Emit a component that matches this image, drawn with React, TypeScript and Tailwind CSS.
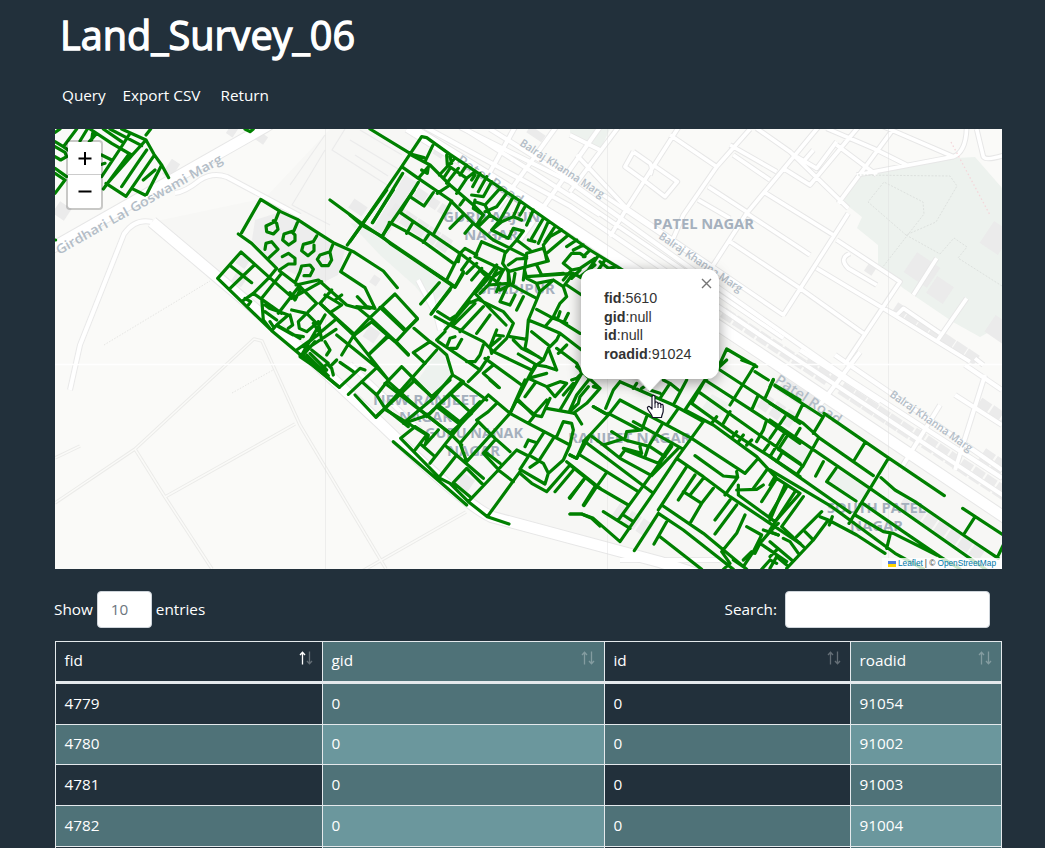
import React from "react";

/* Survey lines are stored per map sheet, in thirds of a pixel from the sheet origin. */
type Sheet = { x: number; y: number; d: string };

const surveySheets: Sheet[] = [
  {
    x: 50,
    y: 125,
    d: `M215 12 L288 45 L312 88 L335 120 L356 158 M302 12 L288 30 M120 12 L185 55 L245 90 M160 12 L215 50 M180 12 L275 62
    M288 45 L245 92 L168 180 M240 25 L210 72 L155 155 M168 175 L228 214 L312 92 M235 90 L160 192 M290 75 L262 115 L215 185
    M335 120 L290 208 M245 190 L285 210 M315 135 L280 165 M155 90 L185 105 M15 22 L30 12 M80 12 L40 65 L15 50 M15 65 L45 82 L50 95 L32 105 L15 95
    M15 130 L50 155 M15 145 L45 165 L15 205 M112 12 L90 48 M140 25 L118 50 M128 25 L125 45 M155 118 L165 115 M585 12 L600 20 L610 12 M12 345 L17 345 M60 60 L95 80 M40 65 L75 90`,
  },
  {
    x: 210,
    y: 190,
    d: `M95 128 L152 28 L212 65 L262 88 L318 125 L370 158 L430 185 L520 243 L562 293
    M85 132 L125 160 L200 235 L178 262 M207 65 L195 95 L168 108 L170 125 L190 132 L204 118 L200 100 L190 92
    M262 98 L252 122 L222 132 L218 150 L236 165 L255 152 L255 135 L245 125 M320 138 L310 155 L280 163 L275 182 L294 197 L312 182 L312 165
    M368 165 L360 185 L330 195 L322 208 L335 227 L355 227 L365 210 L360 188 M165 178 L168 160 L185 155 L204 178 L178 202
    M217 200 L235 190 L255 205 L255 222 L235 222 L208 240 M282 257 L300 257 L310 238 L300 225 L275 228 L270 245 L258 272
    M23 265 L93 186 L178 262 L250 325 M62 228 L125 278 M133 225 L57 298 M23 265 L185 422 L388 592 M178 262 L130 310 L95 335
    M208 242 L268 288 L320 340 L295 365 M215 250 L155 325 L160 390 L185 422 M130 310 L215 370 M268 288 L205 370 M240 308 L255 330 L270 300
    M258 285 L325 270 L410 345 L445 355 L480 383 M105 325 L122 335 L115 345 M165 345 L178 355 L235 375 L200 405 L270 445
    M330 340 L365 300 M345 315 L395 345 L365 365 M330 340 L430 435 M375 330 L395 315 M335 275 L245 325 M240 375 L248 405 L235 415
    M245 360 L290 370 L265 395 L268 415 L290 425 L320 400 L290 370 M345 375 L275 495 M375 390 L280 470 M378 418 L285 480 M325 395 L335 450 M310 400 L330 430 L260 480
    M180 395 L190 410 M315 455 L275 500 M165 365 L200 390 M200 405 L185 422 M205 410 L250 435 L280 440
    M420 190 L392 245 L465 293 L495 355 L470 350 L442 320 M480 383 L555 312 L622 385 L558 455 L480 383 M515 350 L585 418
    M430 435 L480 383 M530 440 L480 490 M558 455 L595 493 M360 30 L455 100 L720 280 M412 165 L530 0 M487 98 L550 0 M612 0 L515 140 M663 373 L720 300
    M285 500 L345 545 M300 490 L350 540 M440 350 L480 355`,
  },
  {
    x: 350,
    y: 125,
    d: `M60 12 L185 88 L222 98 M155 125 L215 35 L230 38 L300 88 L510 228 L720 375 L835 446 M155 125 L35 300 L0 350 M158 145 L68 293
    M155 125 L205 160 L300 225 L370 295 L430 345 L530 395 M180 88 L240 120 L300 180 L370 240 L400 270 M248 62 L225 110 M205 160 L235 125 L232 145 L215 135
    M205 172 L150 262 M180 215 L222 243 L250 203 M118 292 L170 320 L220 350 L310 415 M150 262 L330 385 L440 470 M187 295 L170 325 M235 330 L220 352 M330 385 L290 465
    M118 295 L97 335 M0 270 L35 300 L97 335 L120 355 L315 487 L340 445 M290 90 L292 120 L350 160 L375 140 M310 105 L268 150 M300 95 L305 115 M300 130 L280 160 M325 130 L290 175 M350 160 L320 205
    M300 180 L262 205 M305 228 L252 325 M340 270 L300 310 M370 295 L345 325 M350 120 L330 150 M375 150 L365 165 M390 145 L368 185 M410 155 L385 200
    M425 170 L400 215 L365 210 M450 190 L405 240 M470 205 L440 245 L405 260 M490 215 L450 285 L425 315 M510 230 L490 275 L455 290 L425 315 L475 340 L490 310 L520 318 M525 245 L510 270
    M345 220 L330 240 M375 225 L370 250 L400 270 L380 300 M405 240 L420 270 L450 290 M405 240 L375 230 M550 255 L530 300 M420 270 L385 305 M490 275 L515 285
    M580 280 L545 340 M595 290 L565 355 M615 305 L585 350 M635 315 L600 335 L580 360 L590 405 M655 330 L590 385 M680 345 L650 365 M700 360 L670 375
    M520 318 L500 345 L465 385 L458 415 M500 345 L540 375 M535 345 L555 350 M395 350 L465 380 M395 350 L375 395 L460 435 M530 385 L580 370 L595 408 L530 425 M530 385 L520 465
    M480 475 L475 440 L530 425 M475 420 L500 402 L530 400 M458 415 L475 440 M330 385 L345 370 L380 390 M330 385 L325 410 M360 400 L335 435 M380 415 L350 445 M395 430 L365 465
    M440 420 L410 460 L375 500 M460 435 L440 475 M560 420 L575 450 M575 450 L640 445 M640 415 L665 385 L690 385 L705 395 M640 415 L665 435 L690 430 L735 400 M665 435 L640 465
    M720 375 L700 395 M745 392 L715 435 M765 405 L735 450 M690 455 L735 420 M750 410 L775 430 L800 425`,
  },
  {
    x: 400,
    y: 270,
    d: `M118 38 L62 102 M155 50 L95 130 M90 0 L165 50 L190 5 M113 125 L150 148 L170 135 L255 25 M105 140 L160 170 L250 215 L280 245 L395 300 M210 95 L135 180 M225 100 L160 165 M250 110 L180 185 M270 135 L230 190
    M225 70 L318 165 M210 98 L235 88 L310 125 L340 160 L320 205 L280 245 M225 70 L265 25 L240 0 M290 0 L265 45 M42 175 L90 215 L40 248 L75 280 M110 210 L135 185 M115 215 L240 300
    M250 225 L240 255 L225 275 L200 275 M165 200 L150 205 L140 230 M185 208 L170 235 L150 235 M90 215 L118 235 L140 255 L158 315 L190 335
    M255 265 L365 345 M280 285 L250 310 L298 353 M240 300 L205 335 M265 262 L240 300 M405 285 L330 430 M290 180 L270 230 L300 205 M285 195 L310 198 M270 230 L275 250
    M330 200 L380 208 L385 150 M380 208 L375 235 L430 270 M340 210 L365 235 L415 260 M355 252 L410 285 L430 270 L445 235 L470 210 L480 190 M445 225 L395 185
    M385 150 L435 170 L480 190 L545 240 M435 170 L460 140 L540 190 M410 118 L460 145 L500 160 M480 125 L475 140 M505 130 L495 150 M385 150 L410 90 L420 65 L460 30 M325 40 L410 85
    M345 75 L330 105 M370 80 L350 120 M325 40 L300 95 L330 105 M325 0 L325 40 M345 10 L340 40 L300 60 M375 5 L380 25 L410 40 L460 30 L490 50 L520 10 L565 35 M410 40 L420 65 M325 40 L265 45
    M490 50 L500 80 L480 100 L460 140 M500 45 L545 75 M380 20 L520 10 M540 0 L515 25 M445 235 L470 300 M470 235 L530 280 L545 310 M500 225 L475 250
    M410 285 L440 290 L470 300 M385 325 L440 350 L480 335 L500 340 L465 380 L440 350 M385 325 L410 285 M405 340 L375 380 M440 310 L385 325 M530 290 L600 355
    M545 310 L480 420 M570 325 L530 375 L510 420 M600 355 L560 400 L520 430 M520 340 L490 375 M565 350 L540 380 L535 400 L510 425 M600 355 L580 350
    M355 390 L400 435 M450 385 L425 440 L400 435 L440 390 M440 415 L525 430 L545 462 M580 410 L615 430 M265 45 L240 70 M290 65 L300 40 M280 20 L310 0 M545 310 L530 325 L515 330`,
  },
  {
    x: 300,
    y: 300,
    d: `M0 165 L118 262 L180 205 L195 210 M165 285 L228 352 L255 325 M145 283 L228 205 M110 105 L228 200 L265 240 M160 108 L265 240 L230 285 M215 65 L160 108 L125 165
    M35 150 L85 190 L65 205 M120 187 L160 215 M85 195 L95 205 L100 225 M75 125 L90 150 L80 165 M110 180 L90 200 M60 10 L165 105 M215 65 L285 125 L325 165 M265 110 L210 160
    M240 22 L315 93 L352 58 M0 170 L70 218 M20 165 L85 228 M185 245 L230 285 L255 325 M305 200 L262 245 M305 200 L345 240 L400 295 L455 228 M410 150 L255 325 L325 380 M265 245 L355 325 L450 400
    M400 295 L310 370 M490 248 L410 320 L475 370 L540 305 M400 330 L380 350`,
  },
  {
    x: 370,
    y: 380,
    d: `M20 108 L88 45 L130 5 M45 10 L240 160 L275 195 M45 88 L115 130 L170 165 M130 0 L185 50 L240 0 M275 5 L175 105 L115 125 M275 5 L350 60 M245 45 L305 100 L240 160 M205 75 L275 130
    M355 45 L275 130 L180 250 M355 45 L420 100 L290 245 M380 70 L355 95 L320 120 L375 175 L420 215 M135 140 L92 175 L210 295 M170 165 L135 210 M135 140 L175 165 L165 195 M205 150 L165 195 M155 195 L195 230
    M230 200 L340 295 M260 225 L205 295 M325 125 L270 190 L290 245 M70 185 L200 297 L290 375 M200 290 L240 310 L295 365 L352 410 L417 432 M352 410 L450 275 M295 365 L385 270 L430 305
    M250 308 L290 265 L340 315 M250 308 L300 350 M375 180 L340 220 L385 268 L440 210 L475 228 M345 215 L390 250 M465 0 L420 100 L475 130 L600 195 M440 60 L495 105 L475 130
    M520 160 L450 268 L525 312 L535 280 L520 250 L485 230 M550 175 L505 245 L480 262 M450 280 L485 310 L530 335 L600 255 M465 200 L475 180 L500 188 M600 195 L580 240 L535 280
    M600 195 L610 150 L605 130 L580 125 L560 170 M610 270 L555 335 M645 295 L598 353 M675 320 L640 375 M590 245 L690 325 M600 225 L620 235 L640 190 M600 402 L635 402 L665 415 L690 438 M360 0 L385 22`,
  },
  {
    x: 570,
    y: 360,
    d: `M150 65 L130 90 L107 145 M150 65 L310 135 L400 185 M70 140 L115 165 L150 120 L365 235 M115 165 L60 225 L20 295 M230 170 L215 210 L170 215 L165 235 L100 255 L150 295 L245 347 L325 265
    M190 185 L335 265 M115 160 L210 210 M125 215 L165 240 L240 260 L285 290 M160 265 L215 280 L210 260 M150 290 L165 270 L265 310 M275 195 L235 260 L225 290 M305 250 L265 310
    M20 295 L0 285 M45 245 L250 400 M30 285 L205 395 M0 315 L80 380 L175 435 M40 245 L60 225 L100 255 M80 380 L42 437 M40 360 L0 415 M108 340 L80 380
    M400 185 L320 295 L250 400 L150 545 L70 475 L35 462 L0 462 M305 260 L145 480 M350 320 L265 450 M320 295 L400 350 L480 410 L600 490 L690 550
    M265 460 L193 572 M265 460 L340 510 L490 628 M275 435 L400 520 L530 628 M290 485 L252 552 M270 530 L395 628 M100 455 L180 505 M160 465 L190 485
    M375 287 L460 348 L503 352 L500 335 M365 235 L525 340 L560 300 M503 352 L465 405 M500 390 L560 388 L580 375 M505 375 L505 405 L615 485
    M375 345 L325 420 M400 355 L360 405 M340 395 L395 430 L360 490 M430 385 L395 430 M480 420 L435 480 M500 435 L435 522 M525 465 L500 520 L455 575 L480 610 L460 628
    M310 135 L350 60 M270 115 L300 70 L325 90 M300 70 L280 60 M240 90 L270 100 M230 75 L215 85 M200 70 L190 85 M345 150 L405 60 M325 145 L290 195 M345 150 L430 195 L560 290 L620 355 L690 400
    M470 0 L405 60 M405 60 L365 130 M365 130 L490 220 L600 290 L690 350 M385 95 L590 240 L690 310 M405 60 L590 180 L690 250 M450 30 L565 105 L690 190 M515 0 L555 15 L480 135 M555 35 L595 60 M610 60 L585 115 M615 75 L690 120
    M565 105 L545 150 M480 155 L460 190 M590 180 L580 210 L560 245 M640 225 L600 290 M425 190 L440 170 M485 235 L500 215 M505 245 L520 225 M530 255 L545 240 M580 275 L595 255
    M620 355 L575 425 M590 330 L550 385 M650 380 L600 465 M690 400 L615 485 M530 500 L575 525 L550 575 L520 620 M600 515 L570 550 L650 605 M625 490 L595 520 M580 510 L625 525 M520 600 L545 575 L555 580
    M575 628 L600 600 L620 610 M570 550 L555 580 M600 590 L620 570 M490 600 L520 620 M450 10 L470 -33 L560 20`,
  },
  {
    x: 770,
    y: 360,
    d: `M15 78 L155 168 M162 160 L350 290 L523 407 M10 58 L0 80 M0 130 L100 190 L150 235 L310 347 M97 135 L75 180 M160 170 L130 220 M0 180 L300 385 L350 420 L650 630 M45 170 L0 235 M90 205 L75 230
    M285 248 L253 300 M355 295 L237 490 M145 235 L98 320 M50 230 L25 268 L98 318 M35 280 L20 305 M98 318 L80 345 M0 290 L240 458 M160 305 L137 348 M198 325 L170 365 L258 423
    M0 330 L185 440 L375 580 L460 627 M333 353 L375 390 L435 425 L580 525 L685 595 M275 428 L400 515 L510 590 L570 627 M255 465 L340 515 L370 520 L500 585 M360 525 L350 565 M150 470 L175 480 L260 525 L345 580
    M187 470 L178 495 M578 445 L700 525 M612 475 L580 525 M700 555 L683 590 M15 350 L0 375 M45 375 L0 480 M75 395 L0 510 M100 410 L35 500 L100 560 M155 455 L80 530 M175 480 L130 540 L50 625
    M105 515 L130 540 M0 515 L25 525 M0 545 L65 600 M40 535 L60 545 L85 580 M0 625 L20 590 L50 615`,
  },
];

const streetsLarge = [
  "M50 249 L265 127 L300 104",
  "M408 127 L570 227 L770 360 L1010 521",
  "M152 222 L280 330 L380 423 Q465 505 492 517 L660 562 L700 575",
];

const streets = [
  "M152 222 Q135 218 124 234 L80 345 L70 390",
  "M175 193 Q185 192 200 180 Q213 172 227 177 L300 216",
  "M425 127 L570 206 L760 335 L1010 500",
  "M460 127 L570 182 L700 275 L850 380 L1002 478",
  "M600 127 L520 240 M556 127 L495 212 M515 127 L480 190",
  "M465 129 L600 215 M490 129 L575 182",
  "M800 350 L880 402 M835 355 L930 420 L1002 470 M860 352 L820 405 M940 405 L900 470 M985 375 L955 470 M965 365 L1002 390 M955 395 L1002 425",
  "M350 364 L420 430 M430 290 L440 330 M418 280 L444 330 M620 560 L720 560",
];

const northStreets =
  "M0 30 L90 75 M150 0 L0 200 M330 0 L170 250 L120 335 M300 30 L440 125 L540 12 M440 125 L340 270 L310 340 M560 10 L660 80 L835 250 M750 0 L530 265 L430 420 M970 12 L805 235 M835 265 L640 570 M480 60 L620 140 M490 90 L600 165 M415 185 L530 260 M385 225 L480 280 M530 265 L690 370 L720 390 M580 200 L790 330 M800 345 L990 470 L830 710 M480 350 L690 490 L880 625 M740 430 L940 550 M640 130 L720 180 L870 0 M680 95 L740 130 L800 50 M770 10 L910 70 L1010 120 M860 150 L1150 95 Q1190 80 1190 0 M1220 12 L1240 95 Q1250 110 1320 85 M930 0 L1150 95 M0 205 L640 640 M100 210 L500 480 M190 80 L240 115 Q250 130 240 150 M190 80 L165 125 L220 165 L285 215 L322 170 L250 120 M940 550 L980 570 L1000 550 L1110 625 M1190 520 L1100 650 M840 385 Q805 400 835 430 L920 480 M940 550 L1200 710 M1215 700 L1240 720 M20 90 L170 250 L640 570 M1100 400 L1030 510 M800 60 L920 150 M730 75 L700 110";

type Footprint = { x: number; y: number; w: number; h: number };

const row = (x: number, y: number, n: number, w: number, h: number): Footprint[] =>
  Array.from({ length: n }, (_, i) => ({ x: x + i * 11.8, y: y + i * 7.7, w: w + 3, h }));

const footprints: Footprint[] = [
  ...row(722, 310, 9, 9, 11),
  ...row(805, 360, 3, 9, 11),
  ...row(840, 385, 6, 10, 13),
  ...row(912, 430, 8, 9, 14),
  ...row(894, 305, 7, 10, 11),
  ...row(978, 400, 3, 9, 12),
  ...row(415, 190, 3, 9, 10),
  ...row(390, 205, 5, 10, 15),
  ...row(780, 380, 3, 9, 15),
  ...row(900, 500, 7, 9, 12),
  ...row(980, 450, 3, 9, 18),
  ...row(760, 395, 3, 8, 16),
  ...row(615, 505, 3, 9, 15),
  { x: 908, y: 258, w: 28, h: 24 },
  { x: 930, y: 280, w: 20, h: 20 },
  { x: 985, y: 225, w: 22, h: 26 },
  { x: 988, y: 320, w: 24, h: 20 },
  { x: 251, y: 132, w: 16, h: 9 },
  { x: 228, y: 126, w: 8, h: 10 },
  { x: 166, y: 160, w: 10, h: 18 },
  { x: 55, y: 204, w: 14, h: 14 },
  { x: 238, y: 254, w: 11, h: 13 },
  { x: 234, y: 271, w: 12, h: 14 },
  { x: 371, y: 276, w: 8, h: 9 },
  { x: 365, y: 328, w: 13, h: 13 },
  { x: 350, y: 202, w: 16, h: 11 },
  { x: 457, y: 475, w: 15, h: 16 },
  { x: 527, y: 130, w: 18, h: 8 },
  { x: 435, y: 145, w: 10, h: 12 },
  { x: 866, y: 264, w: 9, h: 10 },
];

const Label = ({
  x,
  y,
  text,
  width,
  angle = 0,
  size = 14,
}: {
  x: number;
  y: number;
  text: string;
  width: number;
  angle?: number;
  size?: number;
}) => (
  <text
    transform={`translate(${x} ${y}) rotate(${angle})`}
    fontSize={size}
    textLength={width}
    lengthAdjust="spacingAndGlyphs"
  >
    {text}
  </text>
);

const MapCanvas = () => (
  <svg className="block h-full w-full" viewBox="55 129 947 440" fill="none">
    <rect x="55" y="129" width="947" height="440" fill="#fafaf8" />
    <path d="M152 222 L265 198 L330 129 L408 129 L1002 521 V569 H660 L492 517Z" fill="#f7f7f5" />
    <g fill="#edf2ee">
      <path d="M857 175 L957 158 L975 157 L1002 188 V325 L980 337 L953 322 L903 288 L878 265 L878 245 L857 228 L862 217 L843 202Z" />
      <path d="M350 223 L366 225 L456 283 L430 305 L415 286 L380 255Z" />
      <path d="M440 348 L452 375 L434 396 L418 380Z" />
      <path d="M570 129 H610 L600 150 L570 133Z M787 436 L810 450 L802 466 L780 450Z M835 468 L870 490 L858 502 L828 482Z M712 394 L730 404 L718 420 L702 408Z" />
    </g>
    <path d="M255 220 L280 212 L345 250 L338 275 L318 285 L275 265 L252 240Z M405 175 L418 183 L385 240 L372 230Z" fill="#ededed" />
    <g fill="#ebebeb">
      {footprints.map((f, i) => (
        <rect
          key={i}
          x={f.x}
          y={f.y}
          width={f.w}
          height={f.h}
          transform={`rotate(34 ${f.x + f.w / 2} ${f.y + f.h / 2})`}
        />
      ))}
    </g>

    <g strokeLinejoin="round">
      <path
        d="M55 503 L135 449 L165 497 L212 569 M135 449 L254 339 L262 341 L300 425 L386 569 M165 497 L295 424 M350 578 L466 512 M55 458 L80 446"
        stroke="#ebebe9"
        strokeWidth="3.5"
      />
      <path
        d="M55 503 L135 449 L165 497 L212 569 M135 449 L254 339 L262 341 L300 425 L386 569 M165 497 L295 424 M350 578 L466 512 M55 458 L80 446"
        stroke="#fafaf8"
        strokeWidth="1.5"
      />
      <path
        d="M290 185 L325 135 M330 225 L292 205 L325 150 M345 129 L332 150 L395 190 M350 140 L400 170 M360 130 L402 155 M355 155 L388 176"
        stroke="#ebebeb"
        strokeWidth="1.2"
      />
      {streets.map((d) => (
        <path key={d} d={d} stroke="#e9e9e9" strokeWidth="6" />
      ))}
      <g transform="translate(570 125) scale(.33333)">
        <path d={northStreets} stroke="#e7e7e7" strokeWidth="17" />
      </g>
      {streetsLarge.map((d) => (
        <path key={d} d={d} stroke="#e7e7e7" strokeWidth="12.5" />
      ))}
      {streets.map((d) => (
        <path key={d} d={d} stroke="#fff" strokeWidth="4" />
      ))}
      <g transform="translate(570 125) scale(.33333)">
        <path d={northStreets} stroke="#fff" strokeWidth="11" />
      </g>
      {streetsLarge.map((d) => (
        <path key={d} d={d} stroke="#fff" strokeWidth="10.5" />
      ))}
      <path
        d="M858 175 L950 176 L957 186 L936 222 L906 235 L868 202 L884 182 L923 202 L924 214 L882 268 M906 235 L940 254 M940 254 L954 238 L967 247 L958 258 L1002 286"
        stroke="#dde1de"
        strokeDasharray="2 1.5"
      />
      <path d="M951 142 L990 215" stroke="#f4d6da" strokeDasharray="1.5 2.5" strokeWidth="1.3" />
      <path d="M104 345 L210 281 M232 393 L273 370" stroke="#e5e5e3" strokeDasharray="1.5 1.5" />
    </g>
    <path d="M325.5 129V569 M607.5 129V569 M888.5 129V569" stroke="#dedede" strokeOpacity=".45" />
    <path d="M55 364.5H1002" stroke="#fff" strokeWidth="1.3" />

    <g fill="#a5b0bd" className="font-['Open_Sans',sans-serif] font-bold">
      <Label x={443} y={222} text="GURU ARJUN" width={97} />
      <Label x={464} y={240} text="NAGAR" width={54} />
      <Label x={478} y={294} text="SHADIPUR" width={77} />
      <Label x={373} y={405} text="NEW RANJEET" width={105} />
      <Label x={399} y={422} text="NAGAR" width={53} />
      <Label x={425} y={438} text="GURU NANAK" width={98} />
      <Label x={447} y={456} text="NAGAR" width={53} />
      <Label x={568} y={443} text="RANJEET NAGAR" width={123} />
      <Label x={653} y={229} text="PATEL NAGAR" width={101} />
      <Label x={827} y={513} text="SOUTH PATEL" width={99} />
      <Label x={850} y={531} text="NAGAR" width={53} />
      <g fill="#b3bdc7" className="font-semibold">
        <Label x={59} y={255} text="Girdhari Lal Goswami Marg" width={189} angle={-29.5} size={13} />
        <Label x={519} y={145} text="Balraj Khanna Marg" width={98} angle={33} size={11} />
        <Label x={658} y={238} text="Balraj Khanna Marg" width={98} angle={34} size={11} />
        <Label x={889} y={396} text="Balraj Khanna Marg" width={98} angle={35} size={11} />
        <Label x={774} y={382} text="Patel Road" width={77} angle={34} size={14} />
        <Label x={456} y={162} text="Patel Road" width={77} angle={34} size={13} />
        <Label x={610} y={271} text="Patel Road" width={77} angle={34} size={13} />
      </g>
    </g>

    <g stroke="#008000" strokeWidth="9.6" strokeLinecap="round" strokeLinejoin="round">
      {surveySheets.map((s) => (
        <path
          key={`${s.x}-${s.y}`}
          d={s.d}
          transform={`translate(${s.x} ${s.y}) scale(.33333)`}
        />
      ))}
    </g>
  </svg>
);

const Popup = () => (
  <div className="absolute left-[526px] top-[140px] h-[110px] w-[138px]">
    <div className="absolute bottom-[-9px] left-[60px] h-[17px] w-[17px] rotate-45 bg-white shadow-[0_3px_14px_rgba(0,0,0,0.4)]" />
    <div className="relative h-full rounded-xl bg-white pl-[23px] pt-[20px] font-['Liberation_Sans',sans-serif] text-[14.3px] leading-[18.6px] text-[#333] shadow-[0_3px_14px_rgba(0,0,0,0.4)]">
      <div><b>fid</b>:5610</div>
      <div><b>gid</b>:null</div>
      <div><b>id</b>:null</div>
      <div><b>roadid</b>:91024</div>
      <svg className="absolute right-[7px] top-[9px] h-[11px] w-[11px]" viewBox="0 0 11 11" stroke="#757575" strokeWidth="1.4">
        <path d="M1 1L10 10M10 1L1 10" />
      </svg>
    </div>
    <svg className="absolute left-[52px] top-[108px] h-[15px] w-[34px]" viewBox="0 0 34 15">
      <path d="M4 0H30L17 13.5Z" fill="#fff" />
    </svg>
    <svg className="absolute left-[62px] top-[125px] h-[25px] w-[22px]" viewBox="0 0 22 25">
      <path
        d="M9 15V3.2C9 .8 12 .8 12 3.2V9C12 7.6 14.8 7.6 15 9.2V10C15.3 8.7 17.6 8.9 17.8 10.3V11C18.2 9.9 20.2 10.2 20.2 12V17C20.2 19 18.8 20.5 18.5 23.5H9.5C9.2 20.5 6.5 18.5 4.8 15.2C3.5 12.8 5.8 11.7 7.2 13.2Z"
        fill="#fff"
        stroke="#161528"
        strokeWidth="1.2"
        strokeLinejoin="round"
      />
      <path d="M12 9V14M15 10V14M17.8 11V14" stroke="#161528" strokeWidth="1" />
    </svg>
  </div>
);

const SortArrows = ({ ascending = false }: { ascending?: boolean }) => (
  <svg className="h-[14px] w-[15px]" viewBox="0 0 15 14" fill="none" stroke="#fff" strokeWidth="1.3">
    <path d="M4.5 13.5V1.5M2 4L4.5 1.2L7 4" opacity={ascending ? 1 : 0.3} />
    <path d="M11.5 .5V12.5M9 10L11.5 12.8L14 10" opacity=".3" />
  </svg>
);

const columns = ["fid", "gid", "id", "roadid"];
const rows = [
  { h: "h-[41px]", cells: ["4779", "0", "0", "91054"] },
  { h: "h-[40px]", cells: ["4780", "0", "0", "91002"] },
  { h: "h-[41px]", cells: ["4781", "0", "0", "91003"] },
  { h: "h-[41px]", cells: ["4782", "0", "0", "91004"] },
  { h: "h-[41px]", cells: ["", "", "", ""] },
];

const shade = (r: number, c: number) => {
  const level = (r % 2) + (c % 2);
  return level === 0 ? "bg-[#22303b]" : level === 1 ? "bg-[#4f7278]" : "bg-[#6b979d]";
};

export default function App() {
  return (
    <div className="h-[848px] overflow-hidden bg-[#22303b] pl-[55px] font-['Open_Sans',sans-serif] text-[15.3px] text-white">
      <header className="h-[129px]">
        <h1 className="pl-[5px] pt-[8px] text-[39.6px] leading-[54px] [-webkit-text-stroke:1.3px_#fff]">Land_Survey_06</h1>
        <nav className="flex pl-[7px] pt-[22px] leading-[23px]">
          <a className="w-[60.5px]">Query</a>
          <a className="w-[98px] whitespace-nowrap">Export CSV</a>
          <a>Return</a>
        </nav>
      </header>

      <section className="relative h-[440px] w-[947px] overflow-hidden bg-[#fafaf8]">
        <MapCanvas />
        <div className="absolute left-[11px] top-[11px] flex h-[70px] w-[37px] flex-col overflow-hidden rounded border-2 border-black/20 bg-white bg-clip-padding">
          <button className="flex h-[33px] items-center justify-center border-b border-[#ccc]" aria-label="Zoom in">
            <svg className="h-[13px] w-[14px]" viewBox="0 0 14 13" stroke="#000" strokeWidth="2"><path d="M.5 6.5H13.5M7 0V13" /></svg>
          </button>
          <button className="flex h-[33px] items-center justify-center" aria-label="Zoom out">
            <svg className="h-[13px] w-[14px]" viewBox="0 0 14 13" stroke="#000" strokeWidth="2"><path d="M.5 6.5H13.5" /></svg>
          </button>
        </div>
        <Popup />
        <div className="absolute bottom-0 right-0 flex h-[11px] items-center gap-[2px] bg-white/80 px-[6px] font-['Liberation_Sans',sans-serif] text-[8.3px] leading-[11px] text-[#333]">
          <svg className="h-[6px] w-[8px]" viewBox="0 0 8 6"><path d="M0 0H8V3H0Z" fill="#4c7be1" /><path d="M0 3H8V6H0Z" fill="#ffd500" /></svg>
          <span className="text-[#0078a8]">Leaflet</span>
          <span>| ©</span>
          <span className="text-[#0078a8]">OpenStreetMap</span>
        </div>
      </section>

      <div className="flex h-[72px] w-[935px] items-start justify-between pt-[22px]">
        <label className="-ml-px flex items-center gap-1">
          Show
          <span className="flex h-[37px] w-[55px] items-center rounded border border-[#ced4da] bg-white pl-[13px] text-[#6c757d]">10</span>
          entries
        </label>
        <label className="flex items-center gap-2">
          Search:
          <input className="h-[37px] w-[205px] rounded border border-[#ced4da] bg-white" />
        </label>
      </div>

      <table className="w-[947px] table-fixed border-separate border-spacing-0 border-l border-t border-[#e4e9ec]">
        <colgroup>
          <col className="w-[267px]" />
          <col className="w-[282px]" />
          <col className="w-[246px]" />
          <col className="w-[151px]" />
        </colgroup>
        <thead>
          <tr className="h-[42px]">
            {columns.map((c, i) => (
              <th key={c} className={`border-b-[3px] border-r border-[#e4e9ec] p-0 pb-[2px] pl-[8.5px] pr-[9px] text-left font-normal ${shade(0, i)}`}>
                <div className="flex items-center justify-between">
                  <span>{c}</span>
                  <span className="-mt-[5px]"><SortArrows ascending={i === 0} /></span>
                </div>
              </th>
            ))}
          </tr>
        </thead>
        <tbody>
          {rows.map((r, ri) => (
            <tr key={ri} className={r.h}>
              {r.cells.map((v, ci) => (
                <td key={ci} className={`border-b border-r border-[#e4e9ec] p-0 pb-[2px] pl-[8.5px] ${shade(ri, ci)}`}>{v}</td>
              ))}
            </tr>
          ))}
        </tbody>
      </table>
    </div>
  );
}
